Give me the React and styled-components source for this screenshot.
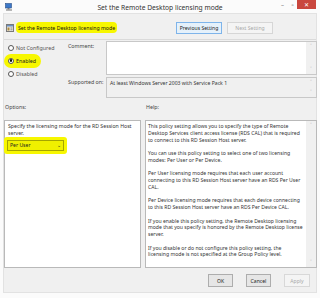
import React from "react";
import styled, { createGlobalStyle } from "styled-components";

const Global = createGlobalStyle`
  html, body { margin: 0; padding: 0; background: #ffffff; }
  * { box-sizing: border-box; }
  body { font-family: "Noto Sans", "Open Sans", sans-serif; color: #222; }
`;

const Frame = styled.div`
  width: 320px;
  height: 298px;
  background: #fbfbfb;
  display: flex;
  flex-direction: column;
  overflow: hidden;
`;

const TitleBar = styled.div`
  height: 13px;
  position: relative;
  display: flex;
  align-items: center;
  justify-content: center;
`;

const AppIcon = styled.svg`
  position: absolute;
  left: 5px;
  top: 3px;
`;

const TitleText = styled.div`
  font-size: 6.7px;
  color: #333;
  margin-top: 2px;
`;

const Controls = styled.div`
  position: absolute;
  right: 4px;
  top: 0;
  display: flex;
  align-items: flex-start;
`;

const CtrlBtn = styled.div`
  width: ${(p) => p.$w || 11}px;
  height: 9px;
  display: flex;
  align-items: center;
  justify-content: center;
  background: ${(p) => (p.$close ? "#c9463d" : "transparent")};
  color: ${(p) => (p.$close ? "#fff" : "#666")};
  font-size: 6px;
  line-height: 1;
`;

const Body = styled.div`
  margin: 0 3px;
  height: 280px;
  background: #f0f0f0;
  border: 1px solid #e2e2e2;
  display: flex;
  flex-direction: column;
`;

const Header = styled.div`
  height: 26px;
  border-bottom: 1px solid #dadada;
  display: flex;
  align-items: flex-start;
  padding: 7px 0 0 1px;
`;

const HeaderLeft = styled.div`
  display: flex;
  align-items: center;
  width: 171px;
  padding-top: 1px;
`;

const Highlight = styled.span`
  background: #f7f700;
  border-radius: ${(p) => p.$r || 3}px;
  padding: ${(p) => p.$pad || "1px 2px"};
  display: inline-flex;
  align-items: center;
`;

const HeaderTitle = styled.span`
  font-size: 5.2px;
  color: #111;
  white-space: nowrap;
`;

const NavButton = styled.div`
  width: 46px;
  height: 12px;
  margin-top: 1px;
  margin-right: 5px;
  border: 1px solid ${(p) => (p.$disabled ? "#d6d6d6" : "#7eb4ea")};
  background: ${(p) => (p.$disabled ? "#f4f4f4" : "#e5f1fb")};
  color: ${(p) => (p.$disabled ? "#a8a8a8" : "#222")};
  font-size: 5.1px;
  display: flex;
  align-items: center;
  justify-content: center;
  white-space: nowrap;
`;

const Top = styled.div`
  display: grid;
  grid-template-columns: 60px 38px 211px;
  padding: 1px 0 0 4px;
  height: 60px;
`;

const Radios = styled.div`
  grid-row: 1 / span 2;
  display: flex;
  flex-direction: column;
`;

const RadioRow = styled.div`
  height: 13px;
  display: flex;
  align-items: center;
`;

const RadioCircle = styled.span`
  width: 6px;
  height: 6px;
  border-radius: 50%;
  border: 1px solid #555;
  background: #fff;
  display: inline-flex;
  align-items: center;
  justify-content: center;
  margin-right: 2px;
  flex: none;
  &::after {
    content: "";
    width: 2.5px;
    height: 2.5px;
    border-radius: 50%;
    background: ${(p) => (p.$on ? "#111" : "transparent")};
  }
`;

const Label = styled.span`
  font-size: 5.3px;
  color: ${(p) => (p.$muted ? "#555" : "#222")};
  white-space: nowrap;
`;

const FieldLabel = styled.div`
  font-size: 5.3px;
  color: #444;
  padding-top: ${(p) => p.$pt || 0}px;
  white-space: nowrap;
`;

const FieldBox = styled.div`
  height: ${(p) => p.$h}px;
  margin-bottom: 2px;
  border: 1px solid #c8c8c8;
  background: ${(p) => (p.$gray ? "#f0f0f0" : "#ffffff")};
  display: flex;
`;

const FieldInner = styled.div`
  flex: 1;
  font-size: 5.1px;
  color: #333;
  padding: 2px 3px;
  white-space: nowrap;
`;

const ScrollBar = styled.div`
  width: 10px;
  background: #f0f0f0;
  display: flex;
  flex-direction: column;
  justify-content: space-between;
  align-items: center;
  padding: 2px 0;
  color: #aaa;
  font-size: 5px;
  line-height: 1;
`;

const SectionLabels = styled.div`
  display: grid;
  grid-template-columns: 141px 1fr;
  padding: 3px 0 0 1px;
  height: 20px;
  align-items: start;
`;

const Panels = styled.div`
  display: grid;
  grid-template-columns: 137px 172px;
  gap: 4px;
  height: 148px;
`;

const Panel = styled.div`
  border: 1px solid #b9b9b9;
  background: #fff;
  display: flex;
`;

const OptionsContent = styled.div`
  padding: 2px 3px;
  font-size: 5.2px;
  line-height: 7px;
  color: #333;
`;

const Select = styled.div`
  width: 57px;
  height: 11px;
  border: 1px solid #a5a500;
  background: #f0f000;
  display: flex;
  align-items: center;
  justify-content: space-between;
  padding: 0 2px;
  font-size: 5.1px;
  color: #222;
`;

const HelpText = styled.div`
  flex: 1;
  padding: 2px 2px;
  font-size: 5.1px;
  line-height: 6.75px;
  color: #333;
`;

const Line = styled.div`
  white-space: nowrap;
  height: 6.75px;
`;

const Footer = styled.div`
  display: flex;
  justify-content: flex-end;
  gap: 13px;
  padding: 6px 6px 0 0;
`;

const DlgButton = styled.div`
  width: ${(p) => p.$w || 25}px;
  height: 13px;
  border: 1px solid ${(p) => (p.$disabled ? "#d8d8d8" : "#adadad")};
  background: ${(p) => (p.$disabled ? "#f4f4f4" : "#e6e6e6")};
  color: ${(p) => (p.$disabled ? "#a8a8a8" : "#222")};
  font-size: 5.1px;
  display: flex;
  align-items: center;
  justify-content: center;
`;

const helpParas = [
  [
    "This policy setting allows you to specify the type of Remote",
    "Desktop Services client access license (RDS CAL) that is required",
    "to connect to this RD Session Host server.",
  ],
  [
    "You can use this policy setting to select one of two licensing",
    "modes: Per User or Per Device.",
  ],
  [
    "Per User licensing mode requires that each user account",
    "connecting to this RD Session Host server have an RDS Per User",
    "CAL.",
  ],
  [
    "Per Device licensing mode requires that each device connecting",
    "to this RD Session Host server have an RDS Per Device CAL.",
  ],
  [
    "If you enable this policy setting, the Remote Desktop licensing",
    "mode that you specify is honored by the Remote Desktop license",
    "server.",
  ],
  [
    "If you disable or do not configure this policy setting, the",
    "licensing mode is not specified at the Group Policy level.",
  ],
];

const PolicyIcon = () => (
  <svg width="8" height="8" viewBox="0 0 8 8" style={{ marginRight: 2, marginLeft: 1 }}>
    <rect x="0.5" y="0.5" width="7" height="7" fill="#e8e8e8" stroke="#7a7a7a" />
    <rect x="1" y="1" width="6" height="1.5" fill="#6a8fc0" />
    <rect x="1.5" y="3.5" width="2" height="3" fill="#b08a3a" />
    <rect x="4.5" y="3.5" width="2" height="1" fill="#888" />
    <rect x="4.5" y="5.3" width="2" height="1" fill="#888" />
  </svg>
);

export default function App() {
  const lines = [];
  helpParas.forEach((p, i) => {
    p.forEach((l, j) => lines.push(<Line key={`${i}-${j}`}>{l}</Line>));
    if (i < helpParas.length - 1) lines.push(<Line key={`b${i}`} />);
  });

  return (
    <>
      <Global />
      <Frame>
        <TitleBar>
          <AppIcon width="8" height="8" viewBox="0 0 8 8">
            <rect x="0.5" y="0.5" width="6" height="4.5" fill="#3c78c8" stroke="#2a4f86" strokeWidth="0.6" />
            <rect x="2.5" y="5.2" width="2" height="1.2" fill="#666" />
            <rect x="1" y="6.4" width="6" height="1.2" fill="#888" />
          </AppIcon>
          <TitleText>Set the Remote Desktop licensing mode</TitleText>
          <Controls>
            <CtrlBtn $w={11}>–</CtrlBtn>
            <CtrlBtn $w={9}>▫</CtrlBtn>
            <CtrlBtn $w={19} $close>✕</CtrlBtn>
          </Controls>
        </TitleBar>
        <Body>
          <Header>
            <HeaderLeft>
              <PolicyIcon />
              <Highlight $r={4} $pad="1.5px 2px">
                <HeaderTitle>Set the Remote Desktop licensing mode</HeaderTitle>
              </Highlight>
            </HeaderLeft>
            <NavButton>Previous Setting</NavButton>
            <NavButton $disabled>Next Setting</NavButton>
          </Header>

          <Top>
            <Radios>
              <RadioRow>
                <RadioCircle />
                <Label $muted>Not Configured</Label>
              </RadioRow>
              <RadioRow>
                <Highlight $r={7} $pad="3px 5px 3px 1px" style={{ marginLeft: -4 }}>
                  <RadioCircle $on style={{ marginLeft: 3 }} />
                  <Label>Enabled</Label>
                </Highlight>
              </RadioRow>
              <RadioRow>
                <RadioCircle />
                <Label $muted>Disabled</Label>
              </RadioRow>
            </Radios>
            <FieldLabel $pt={1}>Comment:</FieldLabel>
            <FieldBox $h={34}>
              <FieldInner />
              <ScrollBar>
                <span>˄</span>
                <span>˅</span>
              </ScrollBar>
            </FieldBox>
            <FieldLabel $pt={1}>Supported on:</FieldLabel>
            <FieldBox $h={21} $gray>
              <FieldInner>At least Windows Server 2003 with Service Pack 1</FieldInner>
              <ScrollBar>
                <span>˄</span>
                <span>˅</span>
              </ScrollBar>
            </FieldBox>
          </Top>

          <SectionLabels>
            <FieldLabel>Options:</FieldLabel>
            <FieldLabel>Help:</FieldLabel>
          </SectionLabels>

          <Panels>
            <Panel>
              <OptionsContent>
                <div>Specify the licensing mode for the RD Session Host</div>
                <div>server.</div>
                <Highlight $r={3} $pad="3px 3px" style={{ marginLeft: -4 }}>
                  <Select>
                    <span>Per User</span>
                    <span style={{ fontSize: 4.5 }}>⌄</span>
                  </Select>
                </Highlight>
              </OptionsContent>
            </Panel>
            <Panel>
              <HelpText>{lines}</HelpText>
              <ScrollBar>
                <span>˄</span>
                <span>˅</span>
              </ScrollBar>
            </Panel>
          </Panels>

          <Footer>
            <DlgButton>OK</DlgButton>
            <DlgButton>Cancel</DlgButton>
            <DlgButton $disabled $w={26}>Apply</DlgButton>
          </Footer>
        </Body>
      </Frame>
    </>
  );
}
